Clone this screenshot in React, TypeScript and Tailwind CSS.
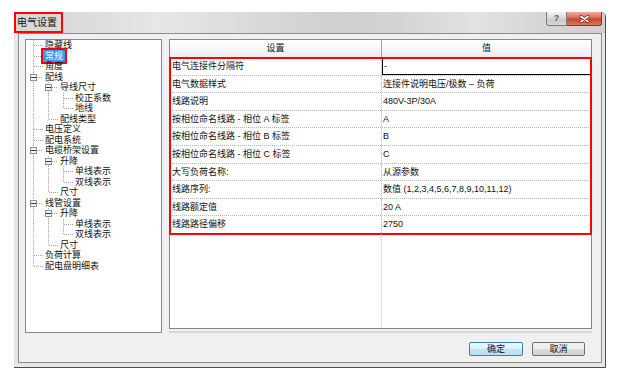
import React from 'react';

type Item = [number, string, boolean?];

const tree: Item[] = [
  [0, '隐藏线'],
  [0, '常规'],
  [0, '角度'],
  [0, '配线', true],
  [1, '导线尺寸', true],
  [2, '校正系数'],
  [2, '地线'],
  [1, '配线类型'],
  [0, '电压定义'],
  [0, '配电系统'],
  [0, '电缆桥架设置', true],
  [1, '升降', true],
  [2, '单线表示'],
  [2, '双线表示'],
  [1, '尺寸'],
  [0, '线管设置', true],
  [1, '升降', true],
  [2, '单线表示'],
  [2, '双线表示'],
  [1, '尺寸'],
  [0, '负荷计算'],
  [0, '配电盘明细表'],
];

function hasNextAt(i: number, c: number) {
  for (let j = i + 1; j < tree.length; j++) {
    const l = tree[j][0];
    if (l < c) return false;
    if (l === c) return true;
  }
  return false;
}

const RH = 10.5;
const DOT = '#a3a3a3';

function GuideCell({
  full,
  own,
  down,
  box,
  last,
}: {
  full?: boolean;
  own?: boolean;
  down?: boolean;
  box?: boolean;
  last?: boolean;
}) {
  const w = last ? 19 : 15;
  return (
    <svg width={w} height={RH} className="block shrink-0 overflow-visible">
      {full && <line x1="7.5" y1="0" x2="7.5" y2={RH} stroke={DOT} strokeDasharray="1 1" />}
      {own && <line x1="7.5" y1="0" x2="7.5" y2="5.5" stroke={DOT} strokeDasharray="1 1" />}
      {own && down && <line x1="7.5" y1="5.5" x2="7.5" y2={RH} stroke={DOT} strokeDasharray="1 1" />}
      {own && <line x1={box ? 11 : 8} y1="5.5" x2="17" y2="5.5" stroke={DOT} strokeDasharray="1 1" />}
      {box && (
        <g>
          <rect x="4.5" y="2.5" width="6" height="6" fill="#f6f6f6" stroke="#8e8f8f" />
          <line x1="5" y1="5.5" x2="10" y2="5.5" stroke="#2b3a4a" />
        </g>
      )}
    </svg>
  );
}

function Tree() {
  return (
    <div className="w-[137px] h-[294px] border border-[#828790] bg-white overflow-hidden flex flex-col">
      {tree.map(([level, label, exp], i) => {
        const cells = [];
        for (let c = 0; c < level; c++) {
          cells.push(<GuideCell key={c} full={hasNextAt(i, c)} />);
        }
        cells.push(<GuideCell key="own" own down={hasNextAt(i, level)} box={!!exp} last />);
        const selected = i === 1;
        return (
          <div key={i} className="flex items-center h-[10.5px] shrink-0 text-[9px] leading-[10.5px] whitespace-nowrap">
            {cells}
            {selected ? (
              <span className="-ml-[2px] px-[2px] h-[12px] leading-[12px] bg-[#3399ff] text-white outline-2 outline-[#ff0000]">
                {label}
              </span>
            ) : (
              <span className="text-[#111]">{label}</span>
            )}
          </div>
        );
      })}
    </div>
  );
}

const rows: [string, string][] = [
  ['电气连接件分隔符', '-'],
  ['电气数据样式', '连接件说明电压/极数 – 负荷'],
  ['线路说明', '480V-3P/30A'],
  ['按相位命名线路 - 相位 A 标签', 'A'],
  ['按相位命名线路 - 相位 B 标签', 'B'],
  ['按相位命名线路 - 相位 C 标签', 'C'],
  ['大写负荷名称:', '从源参数'],
  ['线路序列:', '数值 (1,2,3,4,5,6,7,8,9,10,11,12)'],
  ['线路额定值', '20 A'],
  ['线路路径偏移', '2750'],
];

function Table() {
  return (
    <div className="ml-[7px] w-[423px] flex flex-col">
      <div className="h-[290px] border border-[#828790] bg-white flex flex-col">
        <div className="h-[18px] shrink-0 flex border-b border-[#a9a9a9] bg-[linear-gradient(180deg,#ffffff_0%,#f7f7f7_50%,#ececec_100%)] text-[9px] text-[#111]">
          <div className="w-[212px] border-r border-[#a0a0a0] flex items-center justify-center">设置</div>
          <div className="flex-1 flex items-center justify-center">值</div>
        </div>
        <div className="flex flex-col outline-2 outline-offset-[-1px] outline-[#ff0000]">
          {rows.map(([k, v], i) => (
            <div key={i} className="h-[17.6px] shrink-0 flex border-b border-dotted border-[#b5b5b5] text-[9px] leading-[12px] text-[#111]">
              <div className="w-[212px] border-r border-dotted border-[#b5b5b5] pl-[2px] pt-[2px] whitespace-nowrap">{k}</div>
              {i === 0 ? (
                <div className="flex-1 border border-black pl-[1px] pt-[1px]">{v}</div>
              ) : (
                <div className="flex-1 pl-[1px] pt-[2px] whitespace-nowrap">{v}</div>
              )}
            </div>
          ))}
        </div>
        <div className="flex-1 flex">
          <div className="w-[212px] border-r border-dotted border-[#c8c8c8]" />
        </div>
      </div>
      <div className="mt-[2px] h-[2px] bg-[#d9d9d9]" />
    </div>
  );
}

function TitleBar() {
  return (
    <div className="h-[21px] shrink-0 flex items-start justify-between rounded-tr-[5px] bg-[linear-gradient(90deg,#d6d6d6_0%,#dcdcdc_12%,#e7e7e7_25%,#dadada_40%,#cfcfcf_55%,#d4d4d4_65%,#e2e2e2_78%,#d6d6d6_90%,#cfcfcf_100%)]">
      <div className="w-[49px] h-[21px] border-2 border-[#ff0000] flex items-center pl-[1px] text-[10px] leading-none text-[#111]">
        电气设置
      </div>
      <div className="flex mr-[3px]">
        <div className="w-[21px] h-[14px] border border-t-0 border-[#7f7f7f] rounded-bl-[3px] bg-[linear-gradient(180deg,#f0f0f0_0%,#dcdcdc_45%,#c9c9c9_55%,#d6d6d6_100%)] flex items-center justify-center text-[9px] font-bold leading-none text-[#5a5a5a]">
          ?
        </div>
        <div className="w-[35px] h-[14px] border border-t-0 border-l-0 border-[#86372a] rounded-br-[3px] bg-[linear-gradient(180deg,#eab0a2_0%,#d7705b_42%,#c5462f_55%,#d67a63_100%)] flex items-center justify-center">
          <svg width="11" height="8" viewBox="0 0 11 8">
            <path d="M2 1.5 L9 6.5 M9 1.5 L2 6.5" stroke="#6b2418" strokeWidth="3" strokeLinecap="round" />
            <path d="M2 1.5 L9 6.5 M9 1.5 L2 6.5" stroke="#ffffff" strokeWidth="1.6" strokeLinecap="round" />
          </svg>
        </div>
      </div>
    </div>
  );
}

function Client() {
  return (
    <div className="w-[584px] h-[330px] border border-[#8c8c8c] bg-[#f0f0f0] flex flex-col pl-[6px] pt-[5px]">
      <div className="flex h-[294px]">
        <Tree />
        <Table />
      </div>
      <div className="flex justify-end gap-[9px] pr-[16px] mt-[9px]">
        <div className="w-[54px] h-[14px] border border-[#3c7fb1] rounded-[2px] bg-[linear-gradient(180deg,#edf7fd_0%,#dff1fb_50%,#c4e5f6_52%,#b8dff4_100%)] flex items-center justify-center text-[9px] leading-none text-[#111]">
          确定
        </div>
        <div className="w-[53px] h-[14px] border border-[#707070] rounded-[2px] bg-[linear-gradient(180deg,#f2f2f2_0%,#ebebeb_50%,#dddddd_52%,#cfcfcf_100%)] flex items-center justify-center text-[9px] leading-none text-[#111]">
          取消
        </div>
      </div>
    </div>
  );
}

export default function App() {
  return (
    <div className="w-[628px] h-[380px] bg-white pt-[12px] pl-[14px] [font-family:'Liberation_Sans','Noto_Sans_CJK_SC',sans-serif] text-black">
      <div className="w-[592px] h-[356px] flex flex-col bg-[#e6e6e6] border-r border-b border-[#4e4e4e] rounded-tr-[5px]">
        <TitleBar />
        <div className="flex h-[330px]">
          <div className="w-[4px] shrink-0" />
          <Client />
        </div>
      </div>
    </div>
  );
}
